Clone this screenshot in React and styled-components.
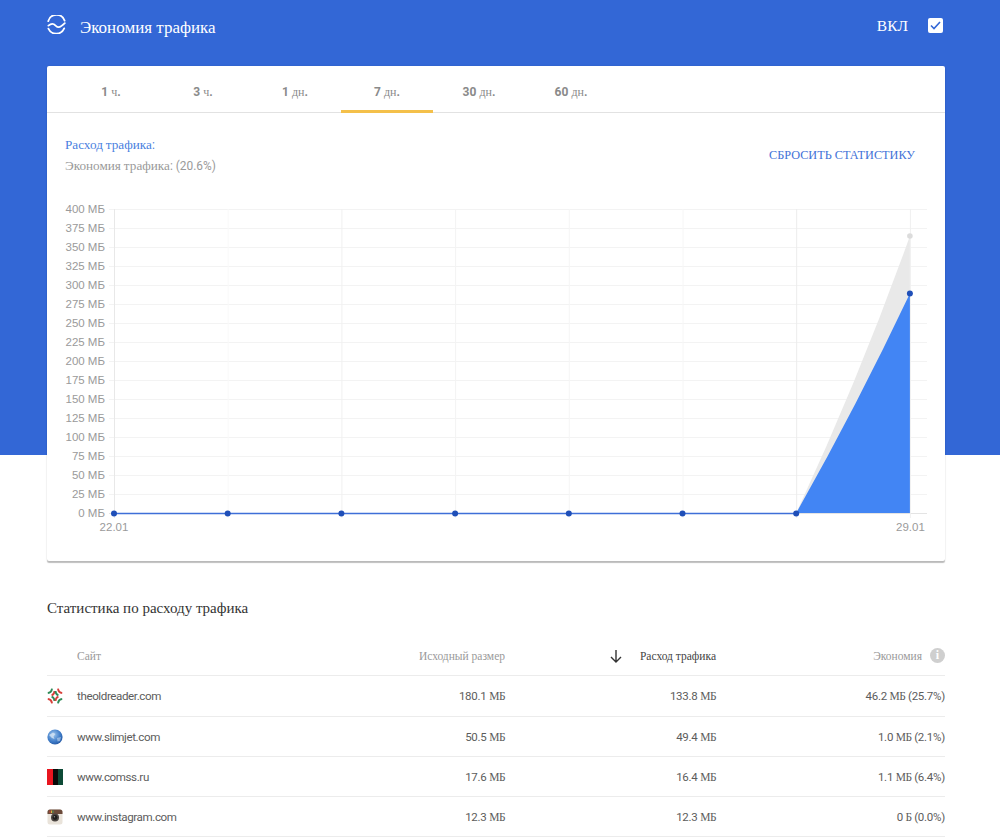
import React from 'react';
import styled, { createGlobalStyle } from 'styled-components';

const GlobalStyle = createGlobalStyle`
  html, body {
    margin: 0;
    padding: 0;
    background: #fff;
  }
  body {
    font-family: Roboto, "Liberation Sans", sans-serif;
    overflow: hidden;
  }
`;

// the original page has Roboto for latin only, cyrillic falls back to a serif
const Cyr = styled.span`
  font-family: "Liberation Serif", serif;
  font-weight: 400;
`;

function Mixed({ children }) {
  const parts = children.split(/([А-Яа-яЁё]+)/);
  return parts.map((part, i) => (/[А-Яа-яЁё]/.test(part) ? <Cyr key={i}>{part}</Cyr> : part));
}

const Page = styled.div`
  height: 840px;
  overflow: hidden;
  background: linear-gradient(#3367d6 455px, #fff 455px);
  padding: 0 55px 0 47px;
`;

const Header = styled.div`
  height: 66px;
  display: flex;
  align-items: flex-start;
  color: #fff;
  font-family: "Liberation Serif", serif;
`;

const Logo = styled.svg`
  width: 19px;
  height: 19px;
  margin-top: 15px;
`;

const Title = styled.div`
  margin: 18px 0 0 14px;
  font-size: 17px;
  line-height: 19px;
  flex: 1;
`;

const OnLabel = styled.div`
  margin: 16px 20px 0 0;
  font-size: 15.5px;
  line-height: 19px;
`;

const CheckBox = styled.div`
  width: 15px;
  height: 15px;
  margin: 18px 2px 0 0;
  background: #fff;
  border-radius: 2px;
  display: flex;
  align-items: center;
  justify-content: center;
`;

const Card = styled.div`
  background: #fff;
  border-radius: 2px;
  height: 495px;
  box-sizing: border-box;
  box-shadow: 0 2px 1px rgba(0, 0, 0, 0.25), 0 0 2px rgba(0, 0, 0, 0.1);
`;

const Tabs = styled.div`
  display: flex;
  height: 47px;
  padding-left: 18px;
  box-sizing: border-box;
  border-bottom: 1px solid #e2e2e2;
`;

const Tab = styled.div`
  width: 92px;
  height: 47px;
  box-sizing: border-box;
  display: flex;
  align-items: center;
  justify-content: center;
  padding-top: 9px;
  font-size: 12px;
  font-weight: 700;
  color: #8a8a8a;
  border-bottom: 3px solid ${(p) => (p.$active ? '#f4c04a' : 'transparent')};
`;

const SummaryRow = styled.div`
  display: flex;
  justify-content: space-between;
  padding: 22px 30px 0 18px;
  height: 62px;
  box-sizing: border-box;
`;

const Legend = styled.div`
  font-size: 11.9px;
  line-height: 20.5px;
  color: ${(p) => p.$color};

  ${Cyr} {
    font-size: 13.2px;
  }
`;

const ResetLink = styled.div`
  font-family: "Liberation Serif", serif;
  font-size: 12.25px;
  color: #3f72d8;
  margin-top: 13px;
`;

const ChartSvg = styled.svg`
  display: block;
  width: 898px;
  height: 386px;
`;

const AxisText = styled.text`
  font-family: "Liberation Sans", sans-serif;
  font-size: 11.5px;
  fill: #9a9a9a;
`;

const TableTitle = styled.div`
  font-family: "Liberation Serif", serif;
  font-size: 15px;
  color: #333;
  margin-top: 38px;
  line-height: 18px;
`;

const Row = styled.div`
  display: grid;
  grid-template-columns: 30px 300px 128px 211px 229px;
  width: 898px;
  box-sizing: border-box;
  align-items: center;
  height: ${(p) => p.$height}px;
  border-bottom: 1px solid #ececec;
  font-size: 11.5px;
  letter-spacing: -0.25px;
  color: #5c5c5c;

  ${Cyr} {
    font-size: 11.5px;
    letter-spacing: -0.5px;
  }
`;

const HeadRow = styled(Row)`
  margin-top: 19px;
  color: #9a9a9a;
  font-family: "Liberation Serif", serif;
  font-size: 11.5px;
  letter-spacing: 0;
`;

const SiteName = styled.div`
  font-size: 11.6px;
  letter-spacing: -0.4px;
  color: #5c5c5c;
`;

const Cell = styled.div`
  text-align: right;
  white-space: nowrap;
`;

const SortCell = styled.div`
  display: flex;
  align-items: center;
  justify-content: flex-end;
  color: #444;
  gap: 17px;
  white-space: nowrap;
`;

const SavingCell = styled.div`
  display: flex;
  align-items: center;
  justify-content: flex-end;
  gap: 8px;
`;

const InfoDot = styled.div`
  width: 15px;
  height: 15px;
  border-radius: 50%;
  background: #cfcfcf;
  color: #fff;
  font-family: "Liberation Serif", serif;
  font-weight: 700;
  font-size: 12px;
  line-height: 15px;
  text-align: center;
`;

const TABS = ['1 ч.', '3 ч.', '1 дн.', '7 дн.', '30 дн.', '60 дн.'];

const ROWS = [
  { site: 'theoldreader.com', icon: 'reader', size: '180.1 МБ', used: '133.8 МБ', saved: '46.2 МБ (25.7%)', h: 41 },
  { site: 'www.slimjet.com', icon: 'globe', size: '50.5 МБ', used: '49.4 МБ', saved: '1.0 МБ (2.1%)', h: 40 },
  { site: 'www.comss.ru', icon: 'comss', size: '17.6 МБ', used: '16.4 МБ', saved: '1.1 МБ (6.4%)', h: 40 },
  { site: 'www.instagram.com', icon: 'insta', size: '12.3 МБ', used: '12.3 МБ', saved: '0 Б (0.0%)', h: 40 },
];

function Favicon({ type }) {
  if (type === 'reader') {
    return (
      <svg width="16" height="16" viewBox="0 0 16 16" fill="none" strokeWidth="1.9">
        <path d="M0.8 5 Q4.5 4.6 5 0.6" stroke="#2d8a57" />
        <path d="M4.6 7.4 Q7.4 6.4 7.5 3" stroke="#d8403a" />
        <path d="M15.2 5 Q11.5 4.6 11 0.6" stroke="#d8403a" />
        <path d="M11.4 7.4 Q8.6 6.4 8.5 3" stroke="#2d8a57" />
        <path d="M0.8 11 Q4.5 11.4 5 15.4" stroke="#d8403a" />
        <path d="M4.6 8.6 Q7.4 9.6 7.5 13" stroke="#2d8a57" />
        <path d="M15.2 11 Q11.5 11.4 11 15.4" stroke="#2d8a57" />
        <path d="M11.4 8.6 Q8.6 9.6 8.5 13" stroke="#d8403a" />
      </svg>
    );
  }
  if (type === 'globe') {
    return (
      <svg width="16" height="16" viewBox="0 0 16 16">
        <defs>
          <radialGradient id="globeFill" cx="0.4" cy="0.35" r="0.75">
            <stop offset="0" stopColor="#9cc4ec" />
            <stop offset="0.6" stopColor="#3f7cc8" />
            <stop offset="1" stopColor="#1d4f9a" />
          </radialGradient>
        </defs>
        <circle cx="8" cy="8" r="7.6" fill="url(#globeFill)" />
        <path d="M2 6 L6 3.5 L8.5 5 L6.5 7.5 L7.5 10 L5 9 Z" fill="#dbe8f6" opacity="0.75" />
        <path d="M10 9 L14 8 L13 12 L10.5 12.5 Z" fill="#cfe0f2" opacity="0.55" />
      </svg>
    );
  }
  if (type === 'comss') {
    return (
      <svg width="16" height="16" viewBox="0 0 16 16">
        <rect x="0" y="0" width="6" height="16" fill="#e8151f" />
        <rect x="6" y="0" width="5" height="16" fill="#0a0a0a" />
        <rect x="11" y="0" width="5" height="16" fill="#0d4a36" />
      </svg>
    );
  }
  return (
    <svg width="16" height="16" viewBox="0 0 16 16">
      <rect x="0.5" y="0.5" width="15" height="15" rx="2.5" fill="#e9e3da" />
      <path d="M0.5 5 V3 A2.5 2.5 0 0 1 3 0.5 H13 A2.5 2.5 0 0 1 15.5 3 V5 Z" fill="#6b4a3a" />
      <rect x="2.5" y="1.5" width="1" height="2.5" fill="#d04a3a" />
      <rect x="4" y="1.5" width="1" height="2.5" fill="#e0b040" />
      <rect x="5.5" y="1.5" width="1" height="2.5" fill="#4a9a5a" />
      <circle cx="8" cy="8.5" r="4" fill="#4a4440" />
      <circle cx="8" cy="8.5" r="2.4" fill="#1f1d1c" />
      <circle cx="7.4" cy="7.8" r="0.7" fill="#8a8a8a" />
    </svg>
  );
}

// chart coords are relative to the card, chart starts at page y=175
const X0 = 67;
const STEP_X = 113.7;
const Y0 = 338;
const STEP_Y = 19;
const V_GRID = ['#e8e8e8', '#f9f9f9', '#f0f0f0', '#f3f3f3', '#f6f6f6', '#f6f6f6', '#ececec', '#f0f0f0'];

function Chart() {
  const ticks = Array.from({ length: 17 }, (_, i) => i * 25);
  const points = Array.from({ length: 8 }, (_, i) => X0 + i * STEP_X);
  const last = points[7];
  const prev = points[6];
  return (
    <ChartSvg viewBox="0 0 898 386">
      {ticks.map((t, i) => (
        <g key={t}>
          <line x1={X0 - 5} x2={880} y1={Y0 - i * STEP_Y + 0.5} y2={Y0 - i * STEP_Y + 0.5} stroke={i === 0 ? '#e4e4e4' : '#f3f3f3'} />
          <AxisText x={X0 - 9} y={Y0 - i * STEP_Y + 4} textAnchor="end">
            {t} МБ
          </AxisText>
        </g>
      ))}
      {points.map((x, i) => (
        <line key={i} x1={x + 0.5} x2={x + 0.5} y1={Y0 - 304} y2={Y0 + 5} stroke={V_GRID[i]} />
      ))}
      <path d={`M${prev} ${Y0} Q${prev + 63} ${Y0 - 135} ${last} ${Y0 - 277} L${last} ${Y0} Z`} fill="#e9e9e9" />
      <circle cx={last} cy={Y0 - 277} r="2.8" fill="#dcdcdc" />
      <path d={`M${prev} ${Y0} Q${prev + 60} ${Y0 - 106} ${last} ${Y0 - 219.5} L${last} ${Y0} Z`} fill="#4285f4" />
      <line x1={X0} x2={prev} y1={Y0 + 0.5} y2={Y0 + 0.5} stroke="#3f6fd8" strokeWidth="1.5" />
      {points.map((x, i) => (
        <circle key={i} cx={x} cy={i === 7 ? Y0 - 219.5 : Y0 + 0.5} r="3" fill="#1f4fb8" />
      ))}
      <AxisText x={X0} y={Y0 + 18} textAnchor="middle">22.01</AxisText>
      <AxisText x={last + 0.5} y={Y0 + 18} textAnchor="middle">29.01</AxisText>
    </ChartSvg>
  );
}

export default function App() {
  return (
    <>
      <GlobalStyle />
      <Page>
        <Header>
          <Logo viewBox="0 0 19 19" fill="none" stroke="#fff" strokeWidth="1.8" strokeLinecap="round">
            <path d="M1.2 6.2 A8.6 8.6 0 0 1 17.6 5.6" />
            <path d="M1.4 10.6 C3.6 8.8 5.2 8.4 6.8 9.2 C8.4 10 9.8 12.4 11.6 12.2 C13.6 12 15.8 10.2 17.8 8.2" />
            <path d="M1.4 13.6 A8.6 8.6 0 0 0 17.2 13.4" />
          </Logo>
          <Title>Экономия трафика</Title>
          <OnLabel>ВКЛ</OnLabel>
          <CheckBox>
            <svg width="11" height="9" viewBox="0 0 11 9" fill="none" stroke="#3367d6" strokeWidth="1.6">
              <path d="M1 4.5 L4 7.5 L10 1" />
            </svg>
          </CheckBox>
        </Header>
        <Card>
          <Tabs>
            {TABS.map((t, i) => (
              <Tab key={t} $active={i === 3}>
                <span><Mixed>{t}</Mixed></span>
              </Tab>
            ))}
          </Tabs>
          <SummaryRow>
            <div>
              <Legend $color="#4a7fe0"><Mixed>Расход трафика:</Mixed></Legend>
              <Legend $color="#9a9a9a"><Mixed>Экономия трафика: (20.6%)</Mixed></Legend>
            </div>
            <ResetLink>СБРОСИТЬ СТАТИСТИКУ</ResetLink>
          </SummaryRow>
          <Chart />
        </Card>
        <TableTitle>Статистика по расходу трафика</TableTitle>
        <HeadRow $height={40}>
          <span />
          <span>Сайт</span>
          <Cell>Исходный размер</Cell>
          <SortCell>
            <svg width="14" height="14" viewBox="0 0 14 14" fill="none" stroke="#333" strokeWidth="1.4">
              <path d="M7 1 V13 M2 8 L7 13 L12 8" />
            </svg>
            <span>Расход трафика</span>
          </SortCell>
          <SavingCell>
            <span>Экономия</span>
            <InfoDot>i</InfoDot>
          </SavingCell>
        </HeadRow>
        {ROWS.map((r) => (
          <Row key={r.site} $height={r.h}>
            <Favicon type={r.icon} />
            <SiteName>{r.site}</SiteName>
            <Cell><Mixed>{r.size}</Mixed></Cell>
            <Cell><Mixed>{r.used}</Mixed></Cell>
            <Cell><Mixed>{r.saved}</Mixed></Cell>
          </Row>
        ))}
      </Page>
    </>
  );
}
